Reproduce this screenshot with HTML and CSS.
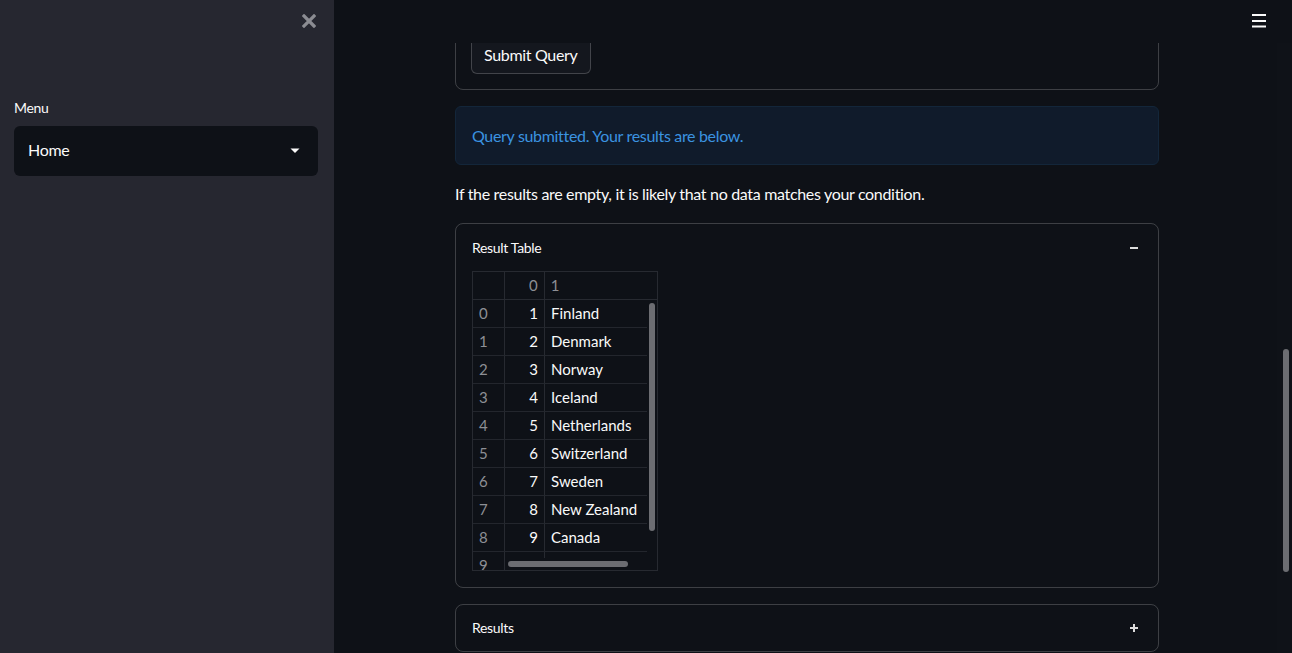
FILE: index.html
```html
<!DOCTYPE html>
<html>
<head>
<meta charset="utf-8">
<link rel="stylesheet" href="styles.css">
</head>
<body>
<div class="app">
  <aside class="sidebar">
    <div class="sidebar-top">
      <button class="close-btn" aria-label="Close sidebar">
        <svg width="14" height="14" viewBox="0 0 14 14"><path d="M2 2 L12 12 M12 2 L2 12" stroke="#8b8c92" stroke-width="3.2" stroke-linecap="square"/></svg>
      </button>
    </div>
    <div class="sidebar-body">
      <label class="field-label">Menu</label>
      <div class="select">
        <span class="select-value">Home</span>
        <svg class="caret" width="10" height="6" viewBox="0 0 10 6"><path d="M0.5 0.5 H9.5 L5 5 Z" fill="#fafafa"/></svg>
      </div>
    </div>
  </aside>
  <main class="main">
    <header class="topbar">
      <button class="menu-btn" aria-label="Menu">
        <svg width="14" height="14" viewBox="0 0 14 14"><path d="M0 1 H14 M0 7 H14 M0 12.5 H14" stroke="#fafafa" stroke-width="2"/></svg>
      </button>
    </header>
    <div class="scroll-track"><div class="scroll-thumb"></div></div>
    <div class="content">
      <div class="block">
        <div class="form">
          <button class="btn">Submit Query</button>
        </div>
        <div class="info">Query submitted. Your results are below.</div>
        <p class="text">If the results are empty, it is likely that no data matches your condition.</p>
        <div class="expander">
          <div class="exp-head">
            <span>Result Table</span>
            <svg width="10" height="10" viewBox="0 0 10 10"><path d="M1 5 H9" stroke="#dcdcdc" stroke-width="2"/></svg>
          </div>
          <div class="exp-body">
            <div class="df">
              <div class="df-grid">
                <div class="row head"><div class="c idx"></div><div class="c num hd">0</div><div class="c txt hd">1</div></div>
                <div class="row"><div class="c idx">0</div><div class="c num">1</div><div class="c txt">Finland</div></div>
                <div class="row"><div class="c idx">1</div><div class="c num">2</div><div class="c txt">Denmark</div></div>
                <div class="row"><div class="c idx">2</div><div class="c num">3</div><div class="c txt">Norway</div></div>
                <div class="row"><div class="c idx">3</div><div class="c num">4</div><div class="c txt">Iceland</div></div>
                <div class="row"><div class="c idx">4</div><div class="c num">5</div><div class="c txt">Netherlands</div></div>
                <div class="row"><div class="c idx">5</div><div class="c num">6</div><div class="c txt">Switzerland</div></div>
                <div class="row"><div class="c idx">6</div><div class="c num">7</div><div class="c txt">Sweden</div></div>
                <div class="row"><div class="c idx">7</div><div class="c num">8</div><div class="c txt">New Zealand</div></div>
                <div class="row"><div class="c idx">8</div><div class="c num">9</div><div class="c txt">Canada</div></div>
                <div class="row last"><div class="c idx">9</div><div class="c num"></div><div class="c txt"></div></div>
              </div>
              <div class="vscroll"></div>
              <div class="hscroll"></div>
            </div>
          </div>
        </div>
        <div class="expander collapsed">
          <div class="exp-head">
            <span>Results</span>
            <svg width="10" height="10" viewBox="0 0 10 10"><path d="M1 5 H9 M5 1 V9" stroke="#dcdcdc" stroke-width="2"/></svg>
          </div>
        </div>
      </div>
    </div>
  </main>
</div>
</body>
</html>
```
FILE: styles.css
```css
* { box-sizing: border-box; }
html, body { margin: 0; padding: 0; }
body {
  font-family: "Lato", "Noto Sans", sans-serif;
  letter-spacing: -0.02em;
  color: #fafafa;
  background: #0e1117;
  width: 1292px;
  height: 653px;
  overflow: hidden;
}
.app { display: flex; height: 653px; }

.sidebar {
  width: 334px;
  flex: none;
  background: #262730;
  display: flex;
  flex-direction: column;
}
.sidebar-top { height: 43px; display: flex; justify-content: flex-end; align-items: center; padding-right: 18px; }
.close-btn { background: none; border: 0; padding: 0; width: 14px; height: 14px; display: flex; margin-top: -1px; }
.sidebar-body { padding: 54px 16px 0 14px; }
.field-label { display: block; font-size: 14px; line-height: 20px; color: #fafafa; margin-bottom: 8px; padding-top: 1px; }
.select {
  width: 304px;
  height: 50px;
  background: #0e1117;
  border-radius: 6px;
  display: flex;
  align-items: center;
  justify-content: space-between;
  padding: 0 18px 3px 14px;
}
.select-value { font-size: 16px; }
.caret { display: block; margin-top: 3px; }

.main { flex: 1; position: relative; overflow: hidden; background: #0e1117; }
.topbar {
  position: absolute; top: 0; left: 0; right: 0; height: 43px;
  background: #0e1117; z-index: 2;
  display: flex; justify-content: flex-end; align-items: center; padding-right: 26px;
}
.menu-btn { background: none; border: 0; padding: 0; width: 14px; height: 14px; display: flex; margin-top: -1px; }
.scroll-track { position: absolute; top: 43px; right: 0; bottom: 0; width: 15px; background: #0f1218; z-index: 3; }
.scroll-thumb { position: absolute; top: 306px; left: 6px; width: 6px; height: 223px; background: #6c6d72; border-radius: 3px; }

.content { padding: 19px 12px 0 0; }
.block { width: 704px; margin: 0 auto; display: flex; flex-direction: column; gap: 16px; }

.form {
  border: 1px solid rgba(250,250,250,0.2);
  border-radius: 8px;
  padding: 15px;
}
.btn {
  font-family: inherit;
  letter-spacing: inherit;
  font-size: 16px;
  color: #fafafa;
  background: #14171e;
  border: 1px solid rgba(250,250,250,0.2);
  border-radius: 6px;
  height: 39px;
  padding: 0 12px;
  display: block;
}
.info {
  background: #101b2b;
  border: 1px solid #13263a;
  border-radius: 6px;
  color: #3b93e0;
  font-size: 16px;
  line-height: 25px;
  padding: 16px;
  height: 59px;
}
.text { margin: 0; font-size: 16px; line-height: 26px; }

.expander {
  border: 1px solid rgba(250,250,250,0.2);
  border-radius: 8px;
}
.exp-head {
  display: flex; justify-content: space-between; align-items: center;
  font-size: 14px; line-height: 20px;
  padding: 14px 19px 12px 16px;
}
.collapsed .exp-head { padding: 13px 19px 13px 16px; }
.exp-head svg { display: block; }
.exp-body { padding: 1px 16px 16px 16px; }

.df {
  position: relative;
  width: 186px;
  height: 300px;
  border: 1px solid #272a31;
  overflow: hidden;
  font-size: 15px;
  letter-spacing: 0;
}
.df-grid { display: flex; flex-direction: column; }
.row { display: flex; height: 28px; }
.c { height: 28px; line-height: 27px; border-bottom: 1px solid #23262d; white-space: nowrap; }
.idx { width: 32px; padding-left: 6px; color: #8d8f95; border-right: 1px solid #272a31; }
.num { width: 40px; text-align: right; padding-right: 6px; border-right: 1px solid #272a31; }
.txt { width: 102px; padding-left: 6px; }
.hd { color: #8d8f95; }
.head .c { border-bottom-color: #272a31; }
.head .txt { width: 113px; }
.last .num { border-right-color: #272a31; height: 6px; }
.last .txt { border-bottom: 0; }
.last .idx { border-bottom: 0; }
.last .num { border-bottom: 0; }
.vscroll { position: absolute; left: 176px; top: 31px; width: 6px; height: 228px; background: #6c6d72; border-radius: 3px; }
.hscroll { position: absolute; left: 35px; top: 289px; width: 120px; height: 6px; background: #6c6d72; border-radius: 3px; }
```
